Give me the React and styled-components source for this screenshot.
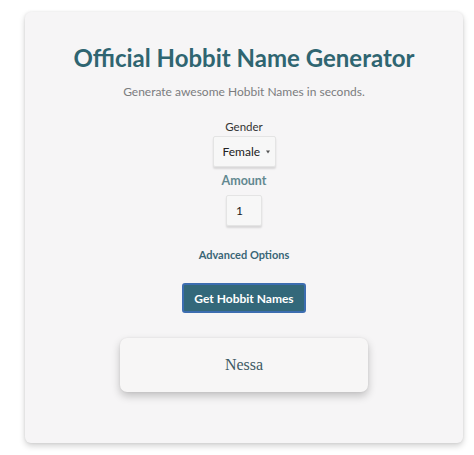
import React, { useState } from "react";
import styled, { createGlobalStyle } from "styled-components";

const GlobalStyle = createGlobalStyle`
	html, body {
		margin: 0;
		padding: 0;
		background: #ffffff;
	}
	body {
		font-family: Lato, "Open Sans", sans-serif;
	}
`;

const Page = styled.div`
	padding: 12px 11px 13px 25px;
`;

const Card = styled.main`
	width: 438px;
	height: 431px;
	box-sizing: border-box;
	background: #f6f5f6;
	border-radius: 6px;
	box-shadow: 0 3px 6px rgba(0, 0, 0, 0.18), 0 0 3px rgba(0, 0, 0, 0.08);
	display: flex;
	flex-direction: column;
	align-items: center;
	padding-top: 31px;
`;

const Title = styled.h1`
	margin: 0;
	font-size: 24px;
	font-weight: 700;
	color: #2f6571;
`;

const Subtitle = styled.p`
	margin: 12px 0 0;
	font-size: 12px;
	color: #7b7c7e;
`;

const Field = styled.div`
	display: flex;
	flex-direction: column;
	align-items: center;
	margin-top: ${(props) => props.top || 0}px;
`;

const Label = styled.label`
	font-size: ${(props) => (props.muted ? 12.5 : 11.5)}px;
	font-weight: ${(props) => (props.muted ? 700 : 400)};
	color: ${(props) => (props.muted ? "#628890" : "#333")};
	margin-bottom: ${(props) => props.gap || 3}px;
`;

const Box = styled.div`
	position: relative;
	display: flex;
	align-items: center;
	box-sizing: border-box;
	height: 31px;
	background: #f7f7f7;
	border: 1px solid #e4e4e4;
	border-radius: 2px;
	box-shadow: 0 2px 2px rgba(0, 0, 0, 0.12);
`;

const Select = styled.select`
	appearance: none;
	border: none;
	background: transparent;
	font-family: Lato, "Open Sans", sans-serif;
	font-size: 12px;
	color: #222;
	padding: 0 14px 0 9px;
	height: 100%;
	outline: none;
`;

const Caret = styled.span`
	position: absolute;
	right: 5px;
	top: 50%;
	transform: translateY(-50%);
	width: 0;
	height: 0;
	border-left: 2.5px solid transparent;
	border-right: 2.5px solid transparent;
	border-top: 3px solid #555;
	pointer-events: none;
`;

const NumberInput = styled.input`
	width: 34px;
	height: 100%;
	box-sizing: border-box;
	border: none;
	background: transparent;
	font-family: Lato, "Open Sans", sans-serif;
	font-size: 12px;
	color: #222;
	padding: 0 9px;
	outline: none;
	-moz-appearance: textfield;
	&::-webkit-inner-spin-button,
	&::-webkit-outer-spin-button {
		-webkit-appearance: none;
		margin: 0;
	}
`;

const AdvancedLink = styled.a`
	margin-top: 22px;
	font-size: 11px;
	font-weight: 700;
	color: #3a6676;
	text-decoration: none;
	cursor: pointer;
`;

const Button = styled.button`
	margin-top: 22px;
	height: 30px;
	padding: 0 10px;
	background: #33687a;
	color: #fff;
	border: 2px solid #3c6db0;
	border-radius: 3px;
	font-family: Lato, "Open Sans", sans-serif;
	font-size: 12px;
	font-weight: 700;
	cursor: pointer;
`;

const Result = styled.div`
	margin-top: 25px;
	width: 248px;
	height: 54px;
	display: flex;
	align-items: center;
	justify-content: center;
	background: #f7f6f6;
	border-radius: 7px;
	box-shadow: 0 4px 8px rgba(0, 0, 0, 0.22), 0 0 2px rgba(0, 0, 0, 0.08);
	font-family: "Liberation Serif", "DejaVu Serif", serif;
	font-size: 16px;
	color: #3e5a64;
`;

export default function App() {
	const [gender, setGender] = useState("Female");
	const [amount, setAmount] = useState(1);

	return (
		<>
			<GlobalStyle />
			<Page>
				<Card>
					<Title>Official Hobbit Name Generator</Title>
					<Subtitle>Generate awesome Hobbit Names in seconds.</Subtitle>
					<Field top={21}>
						<Label>Gender</Label>
						<Box>
							<Select value={gender} onChange={(e) => setGender(e.target.value)}>
								<option>Female</option>
								<option>Male</option>
							</Select>
							<Caret />
						</Box>
					</Field>
					<Field top={6}>
						<Label muted gap={7}>Amount</Label>
						<Box>
							<NumberInput type="number" value={amount} min={1} onChange={(e) => setAmount(e.target.value)} />
						</Box>
					</Field>
					<AdvancedLink>Advanced Options</AdvancedLink>
					<Button>Get Hobbit Names</Button>
					<Result>Nessa</Result>
				</Card>
			</Page>
		</>
	);
}
